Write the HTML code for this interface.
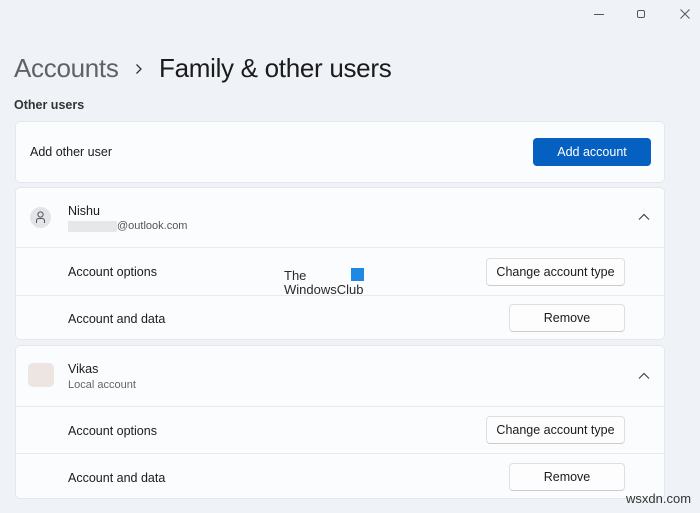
<!DOCTYPE html>
<html><head><style>
*{margin:0;padding:0;box-sizing:border-box}
body{width:700px;height:513px;background:#eff3f8;font-family:"Liberation Sans",sans-serif;color:#1b1b1b;position:relative;overflow:hidden;font-size:12.5px}
.abs{position:absolute}
.card{position:absolute;left:15px;width:650px;background:#fbfcfd;border:1px solid #e4e7eb;border-radius:5px}
.sep{position:absolute;left:15px;width:650px;height:1px;background:#e8eaed}
.btn{position:absolute;background:#fdfdfd;border:1px solid #dcdfe3;border-bottom-color:#c9ccd0;border-radius:4px;text-align:center;font-size:12.5px;line-height:26px}
.lbl{position:absolute;font-size:12.5px}
</style></head><body>
<div class="abs" style="left:594px;top:14px;width:10px;height:1px;background:#555"></div>
<div class="abs" style="left:637px;top:10px;width:8px;height:8px;border:1px solid #555;border-radius:2px"></div>
<svg class="abs" style="left:680px;top:9px" width="10" height="10"><path d="M0.5 0.5L9.5 9.5M9.5 0.5L0.5 9.5" stroke="#555" stroke-width="1"/></svg>
<div class="abs" style="left:14px;top:53px;font-size:26px;color:#5f6368;letter-spacing:-0.3px">Accounts</div>
<svg class="abs" style="left:135px;top:63px" width="8" height="12"><path d="M1.5 1.5L6 6L1.5 10.5" stroke="#333" stroke-width="1.3" fill="none"/></svg>
<div class="abs" style="left:159px;top:53px;font-size:26px;color:#1b1b1b;letter-spacing:-0.3px">Family &amp; other users</div>
<div class="abs" style="left:14px;top:98px;font-size:12.5px;font-weight:bold;color:#333">Other users</div>

<div class="card" style="top:121px;height:62px"></div>
<div class="lbl" style="left:30px;top:145px">Add other user</div>
<div class="abs" style="left:533px;top:138px;width:118px;height:28px;background:#0560c2;border-radius:4px;color:#fff;text-align:center;line-height:28px;font-size:12.5px">Add account</div>

<div class="card" style="top:187px;height:153px"></div>
<div class="sep" style="top:247px"></div><div class="sep" style="top:295px"></div>
<div class="abs" style="left:30px;top:207px;width:21px;height:21px;border-radius:50%;background:#e2e4e7"></div>
<svg class="abs" style="left:35px;top:211px" width="11" height="13"><circle cx="5.5" cy="3.5" r="2.6" stroke="#555" fill="none"/><path d="M1.5 12V10Q1.5 7.5 4 7.5H7Q9.5 7.5 9.5 10V12" stroke="#555" fill="none"/></svg>
<div class="lbl" style="left:68px;top:204px">Nishu</div>
<div class="abs" style="left:68px;top:221px;width:49px;height:11px;background:#e6e7e9"></div>
<div class="abs" style="left:117px;top:220px;font-size:11px;color:#555">@outlook.com</div>
<svg class="abs" style="left:638px;top:213px" width="12" height="8"><path d="M1 6.5L6 1.5L11 6.5" stroke="#444" stroke-width="1.2" fill="none"/></svg>
<div class="lbl" style="left:68px;top:265px">Account options</div>
<div class="btn" style="left:486px;top:258px;width:139px;height:28px">Change account type</div>
<div class="lbl" style="left:68px;top:312px">Account and data</div>
<div class="btn" style="left:509px;top:304px;width:116px;height:28px">Remove</div>

<div class="abs" style="left:284px;top:269px;font-size:13px;color:#2a2a2a;line-height:14px">The<br>WindowsClub</div>
<div class="abs" style="left:351px;top:268px;width:13px;height:13px;background:#1e88e5"></div>

<div class="card" style="top:345px;height:154px"></div>
<div class="sep" style="top:406px"></div><div class="sep" style="top:453px"></div>
<div class="abs" style="left:28px;top:363px;width:26px;height:24px;border-radius:5px;background:#ece5e2"></div>
<div class="lbl" style="left:68px;top:362px">Vikas</div>
<div class="abs" style="left:68px;top:379px;font-size:11px;color:#666">Local account</div>
<svg class="abs" style="left:638px;top:372px" width="12" height="8"><path d="M1 6.5L6 1.5L11 6.5" stroke="#444" stroke-width="1.2" fill="none"/></svg>
<div class="lbl" style="left:68px;top:424px">Account options</div>
<div class="btn" style="left:486px;top:416px;width:139px;height:28px">Change account type</div>
<div class="lbl" style="left:68px;top:471px">Account and data</div>
<div class="btn" style="left:509px;top:463px;width:116px;height:28px">Remove</div>
<div class="abs" style="left:626px;top:491px;font-size:13px;color:#333">wsxdn.com</div>
</body></html>
